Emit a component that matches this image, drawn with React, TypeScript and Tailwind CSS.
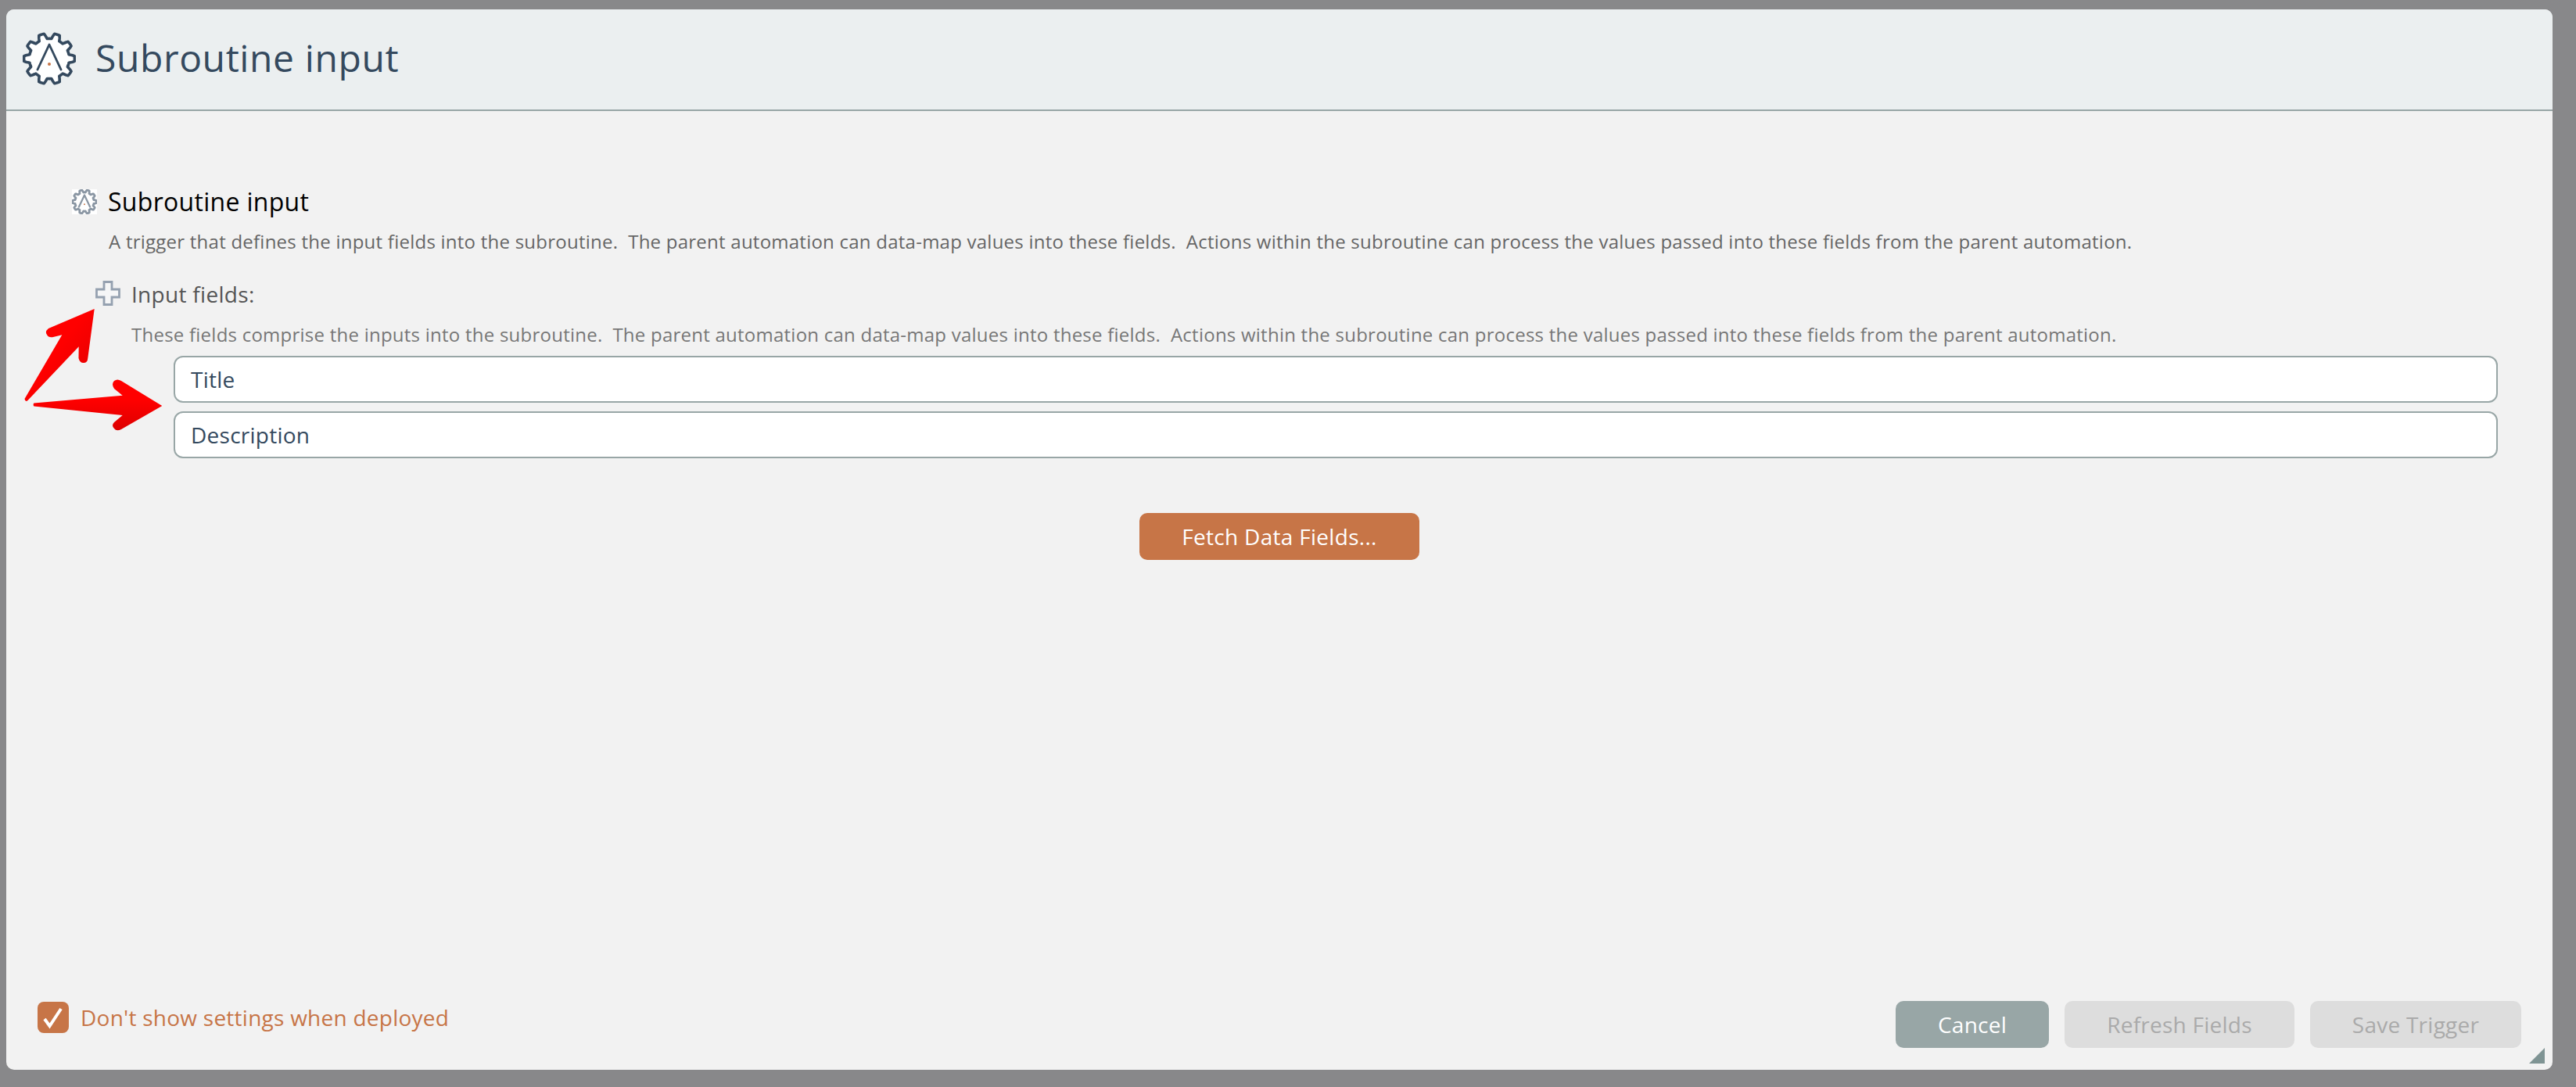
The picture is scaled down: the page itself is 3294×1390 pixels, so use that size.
import React from "react";

function gearPath(cx: number, cy: number, r: number, amp: number, teeth: number) {
  const pts: string[] = [];
  const n = 360;
  for (let i = 0; i < n; i++) {
    const t = (i / n) * Math.PI * 2;
    const c = Math.cos(teeth * t + Math.PI);
    const s = Math.max(-1, Math.min(1, c * 2));
    const rad = r + amp * s;
    pts.push(`${(cx + rad * Math.sin(t)).toFixed(2)} ${(cy - rad * Math.cos(t)).toFixed(2)}`);
  }
  return "M" + pts.join("L") + "Z";
}

function Gear({ className, stroke, strokeW }: { className: string; stroke: string; strokeW: number }) {
  return (
    <svg viewBox="0 0 68 68" className={className}>
      <path d={gearPath(34, 34, 29, 3.4, 10)} fill="#fff" stroke={stroke} strokeWidth={strokeW} strokeLinejoin="round" />
      <path d="M19 48 L34 16 L49 48" fill="none" stroke={stroke} strokeWidth={strokeW * 0.8} strokeLinecap="round" strokeLinejoin="round" />
      <circle cx="34" cy="41" r="2" fill="#c77547" />
    </svg>
  );
}

const desc1 =
  "A trigger that defines the input fields into the subroutine.\u00a0 The parent automation can data-map values into these fields.\u00a0 Actions within the subroutine can process the values passed into these fields from the parent automation.";
const desc2 =
  "These fields comprise the inputs into the subroutine.\u00a0 The parent automation can data-map values into these fields.\u00a0 Actions within the subroutine can process the values passed into these fields from the parent automation.";

export default function App() {
  return (
    <div className="relative w-[3294px] h-[1390px] overflow-hidden bg-[#88888a] pt-[12px] pl-[8px] pr-[30px] pb-[22px] font-['Open_Sans',sans-serif]">
      <div className="relative flex flex-col h-full bg-[#f2f2f2] rounded-[10px] overflow-hidden">
        <div className="flex items-center h-[130px] shrink-0 bg-[#ebeff0] border-b-2 border-[#98a6a6] pl-[21px] pb-[2px] gap-[27px]">
          <Gear className="w-[68px] h-[68px] shrink-0" stroke="#34495e" strokeW={3.6} />
          <div className="text-[48px] leading-[64px] tracking-[0.6px] text-[#34495e] pb-[2px] -ml-[2px]">Subroutine input</div>
        </div>

        <div className="flex flex-col flex-1 pt-[100px]">
          <div className="flex items-center h-[32px] pl-[84px] gap-[14px]">
            <div className="w-[32px] h-[32px] bg-white overflow-hidden">
              <Gear className="w-[32px] h-[32px] blur-[0.7px]" stroke="#8a96a3" strokeW={6} />
            </div>
            <div className="text-[32px] leading-[44px] tracking-[0.3px] text-black">Subroutine input</div>
          </div>
          <div className="pl-[131px] mt-[18px] text-[24px] leading-[34px] tracking-[0.24px] text-[#666666] whitespace-nowrap">{desc1}</div>

          <div className="flex items-center h-[32px] mt-[33px] pl-[114px] gap-[15px]">
            <svg viewBox="0 0 32 32" className="w-[32px] h-[32px] shrink-0 blur-[0.5px]">
              <path d="M11 1.5 H21 V11 H30.5 V21 H21 V30.5 H11 V21 H1.5 V11 H11 Z" fill="#f5f6f7" stroke="#95a1b0" strokeWidth="2.8" />
            </svg>
            <div className="text-[28px] leading-[38px] tracking-[0.3px] text-[#555555] -ml-[1px] pt-[1px]">Input fields:</div>
          </div>
          <div className="pl-[160px] mt-[20px] text-[24px] leading-[34px] tracking-[0.24px] text-[#777777] whitespace-nowrap">{desc2}</div>

          <div className="flex flex-col gap-[11px] mt-[10px] pl-[214px] pr-[70px]">
            {["Title", "Description"].map((t) => (
              <div
                key={t}
                className="flex items-center h-[60px] bg-white border-2 border-[#98a6a6] rounded-[12px] pl-[20px] text-[28px] tracking-[0.25px] text-[#34495e]"
              >
                {t}
              </div>
            ))}
          </div>

          <div className="flex justify-center mt-[70px]">
            <div className="flex items-center justify-center w-[358px] h-[60px] bg-[#c77547] rounded-[10px] text-[28px] tracking-[0.3px] text-white">
              Fetch Data Fields...
            </div>
          </div>

          <div className="flex justify-between items-start mt-auto pl-[40px] pr-[40px] pb-[28px]">
            <div className="flex items-center gap-[15px] h-[40px]">
              <div className="w-[40px] h-[40px] bg-[#c77547] rounded-[8px] shrink-0">
                <svg viewBox="0 0 40 40" className="w-[40px] h-[40px]">
                  <path d="M9 22 L15.5 31 L30 9" fill="none" stroke="#fff" strokeWidth="4" />
                </svg>
              </div>
              <div className="text-[28px] tracking-[0.25px] text-[#c77547] whitespace-nowrap">Don't show settings when deployed</div>
            </div>
            <div className="flex gap-[20px] -mt-[1px] text-[28px] tracking-[0.25px]">
              <div className="flex items-center justify-center w-[196px] h-[60px] bg-[#98a6a6] rounded-[10px] text-white">Cancel</div>
              <div className="flex items-center justify-center w-[294px] h-[60px] bg-[#dddddd] rounded-[10px] text-[#aaaaaa]">Refresh Fields</div>
              <div className="flex items-center justify-center w-[270px] h-[60px] bg-[#dddddd] rounded-[10px] text-[#aaaaaa]">Save Trigger</div>
            </div>
          </div>
        </div>

        <svg viewBox="0 0 20 20" className="absolute right-[10px] bottom-[8px] w-[20px] h-[20px]">
          <path d="M20 0 V20 H0 Z" fill="#7f9494" />
        </svg>
      </div>

      <svg viewBox="0 0 3294 1390" className="absolute inset-0 w-[3294px] h-[1390px] pointer-events-none">
        <defs>
          <linearGradient id="g1" x1="0" y1="0" x2="1" y2="1">
            <stop offset="0.45" stopColor="#ff0000" />
            <stop offset="1" stopColor="#dd0000" />
          </linearGradient>
          <linearGradient id="g2" x1="0" y1="0" x2="0" y2="1">
            <stop offset="0.4" stopColor="#ff0000" />
            <stop offset="1" stopColor="#dd0000" />
          </linearGradient>
        </defs>
        <path
          d="M120.7 395 L62 420 Q57 424 60 428 Q62 432 68 431 L79.3 428.3 L31.5 510 Q32 514 35 512.5 L100.7 443.3 L100.5 458 Q102 464 106.7 464 Q112 464 112.3 458 Z"
          fill="url(#g1)"
        />
        <path
          d="M43.3 515.5 L156.7 505.7 L146 497 Q142 491 146 487 Q150 484 155 487 L207.3 519 L155 549 Q149 552 146 548 Q142 544 146 540 L156.7 531 L43.3 519.5 Q42 517.5 43.3 515.5 Z"
          fill="url(#g2)"
        />
      </svg>
    </div>
  );
}
